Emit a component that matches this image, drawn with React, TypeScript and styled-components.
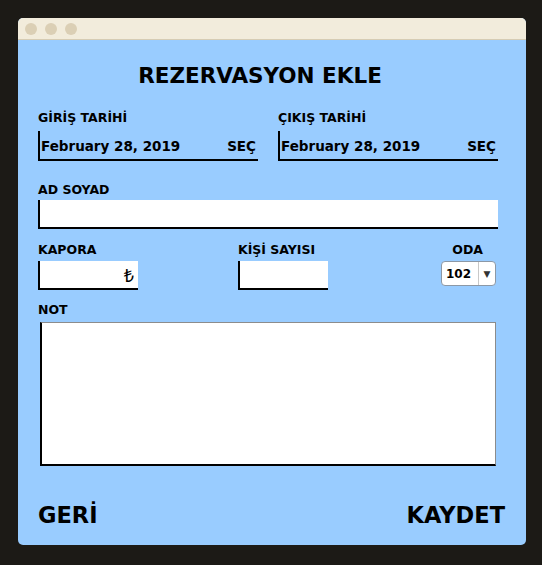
import React from 'react';
import styled, { createGlobalStyle } from 'styled-components';

const GlobalStyle = createGlobalStyle`
  html, body {
    margin: 0;
    padding: 0;
    background: #1c1a16;
  }
  body {
    font-family: "DejaVu Sans", "Liberation Sans", sans-serif;
    color: #000;
  }
`;

const Page = styled.div`
  padding: 18px 16px 20px 18px;
`;

const Window = styled.div`
  width: 508px;
  border-radius: 5px;
  overflow: hidden;
  background: #99ccff;
`;

const TitleBar = styled.div`
  height: 21px;
  background: #f2ecdc;
  border-bottom: 1px solid #d6ccb4;
  display: flex;
  align-items: center;
  gap: 8px;
  padding-left: 7px;
`;

const Dot = styled.span`
  width: 12px;
  height: 12px;
  border-radius: 50%;
  background: #dbcfb5;
`;

const Content = styled.div`
  padding: 22px 28px 17px 20px;
  display: flex;
  flex-direction: column;
`;

const Heading = styled.h1`
  margin: 0 16px 0 0;
  text-align: center;
  font-size: 21.5px;
  line-height: 28px;
  font-weight: bold;
`;

const Label = styled.div<{ $mr?: number }>`
  font-size: 12.5px;
  font-weight: bold;
  line-height: 15px;
  margin-right: ${p => p.$mr || 0}px;
`;

const DateRow = styled.div`
  display: grid;
  grid-template-columns: 220px 220px;
  column-gap: 20px;
  margin-top: 20px;
`;

const Field = styled.div<{ $align?: string; $gap?: number }>`
  display: flex;
  flex-direction: column;
  gap: ${p => p.$gap ?? 6}px;
  align-items: ${p => p.$align || 'stretch'};
`;

const DateBox = styled.div`
  height: 26px;
  border-left: 2px solid #000;
  border-bottom: 2px solid #000;
  display: flex;
  align-items: center;
  justify-content: space-between;
  padding: 2px 2px 0 1px;
  font-size: 13.5px;
  font-weight: bold;
`;

const TextBox = styled.div<{ $w?: number }>`
  width: ${p => (p.$w ? `${p.$w}px` : 'auto')};
  height: 27px;
  background: #fff;
  border-left: 2px solid #000;
  border-bottom: 2px solid #000;
  box-sizing: content-box;
  display: flex;
  align-items: center;
  justify-content: flex-end;
  padding-right: 4px;
`;

const Currency = styled.span`
  font-family: "Noto Sans", "DejaVu Sans", sans-serif;
  font-size: 18px;
  font-weight: normal;
`;

const Block = styled.div<{ $mt: number }>`
  margin-top: ${p => p.$mt}px;
`;

const MiddleRow = styled.div`
  display: grid;
  grid-template-columns: 200px 203px 1fr;
  margin-top: 13px;
`;

const Select = styled.div`
  width: 55px;
  height: 25px;
  box-sizing: border-box;
  margin-right: 3px;
  background: #fff;
  border: 1px solid #8c98a6;
  border-radius: 4px;
  display: flex;
  align-items: stretch;
  font-size: 12px;
  font-weight: bold;
`;

const SelectValue = styled.span`
  flex: 1;
  display: flex;
  align-items: center;
  padding-left: 4px;
`;

const SelectArrow = styled.span`
  width: 16px;
  border-left: 1px solid #c8c8c8;
  display: flex;
  align-items: center;
  justify-content: center;
  font-size: 9px;
  color: #333;
`;

const NoteArea = styled.div`
  margin: 5px 2px 0 2px;
  height: 141px;
  background: #fff;
  border: 1px solid #8c8c8c;
  border-left: 2px solid #000;
  border-bottom: 2px solid #000;
`;

const Footer = styled.div`
  display: flex;
  justify-content: space-between;
  align-items: center;
  margin: 36px -7px 0 0;
`;

const ActionButton = styled.button`
  background: none;
  border: none;
  padding: 0;
  font-family: inherit;
  font-size: 22.5px;
  font-weight: bold;
  color: #000;
  cursor: pointer;
`;

export default function App() {
  return (
    <Page>
      <GlobalStyle />
      <Window>
        <TitleBar>
          <Dot />
          <Dot />
          <Dot />
        </TitleBar>
        <Content>
          <Heading>REZERVASYON EKLE</Heading>
          <DateRow>
            <Field>
              <Label>GİRİŞ TARİHİ</Label>
              <DateBox>
                <span>February 28, 2019</span>
                <span>SEÇ</span>
              </DateBox>
            </Field>
            <Field>
              <Label>ÇIKIŞ TARİHİ</Label>
              <DateBox>
                <span>February 28, 2019</span>
                <span>SEÇ</span>
              </DateBox>
            </Field>
          </DateRow>
          <Block $mt={21}>
            <Field $gap={3}>
              <Label>AD SOYAD</Label>
              <TextBox />
            </Field>
          </Block>
          <MiddleRow>
            <Field $align="flex-start" $gap={4}>
              <Label>KAPORA</Label>
              <TextBox $w={94}>
                <Currency>₺</Currency>
              </TextBox>
            </Field>
            <Field $align="flex-start" $gap={4}>
              <Label>KİŞİ SAYISI</Label>
              <TextBox $w={84} />
            </Field>
            <Field $align="flex-end" $gap={4}>
              <Label $mr={16}>ODA</Label>
              <Select>
                <SelectValue>102</SelectValue>
                <SelectArrow>▼</SelectArrow>
              </Select>
            </Field>
          </MiddleRow>
          <Block $mt={12}>
            <Label>NOT</Label>
            <NoteArea />
          </Block>
          <Footer>
            <ActionButton>GERİ</ActionButton>
            <ActionButton>KAYDET</ActionButton>
          </Footer>
        </Content>
      </Window>
    </Page>
  );
}
